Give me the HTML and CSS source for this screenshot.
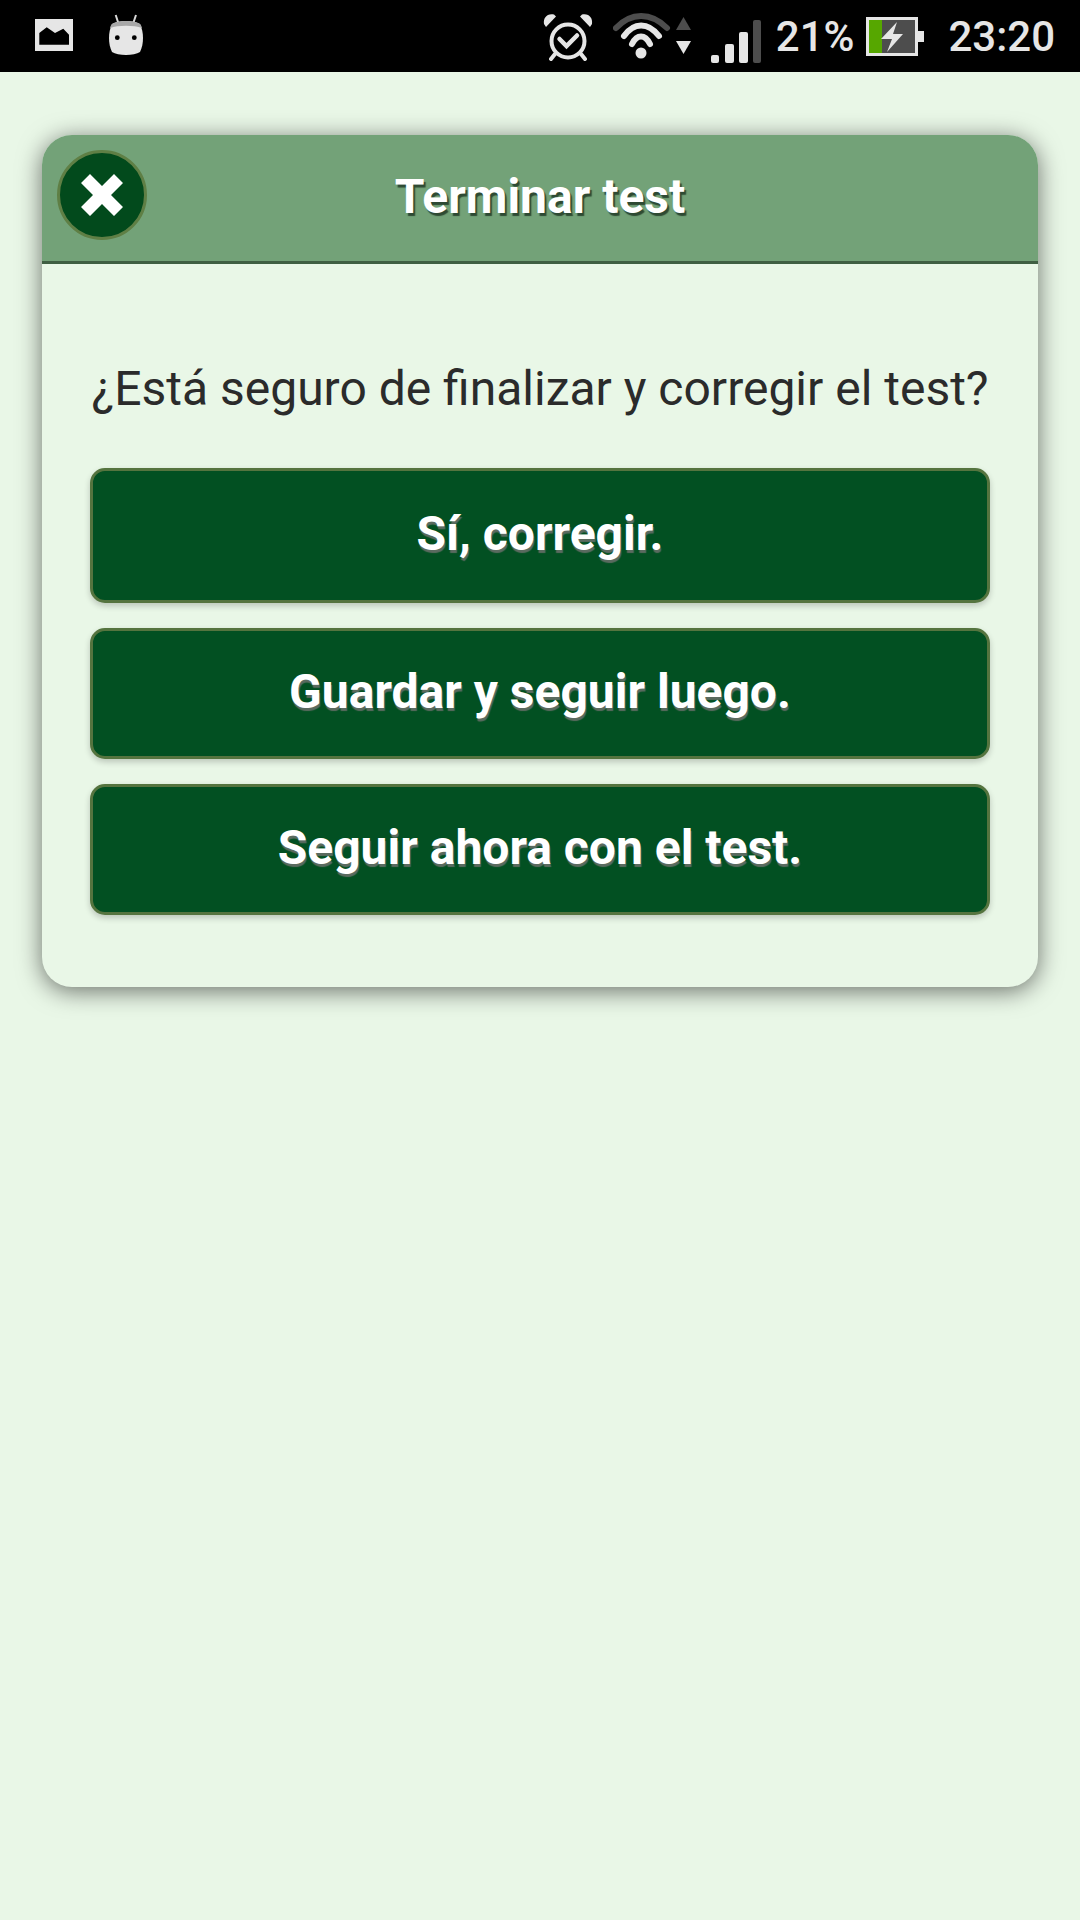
FILE: index.html
```html
<!DOCTYPE html>
<html lang="es">
<head>
<meta charset="utf-8">
<title>Terminar test</title>
<link rel="stylesheet" href="styles.css">
</head>
<body>
<header class="status">
  <div class="status-left">
    <svg class="ic-photo" width="38" height="32" viewBox="0 0 38 32"><path fill="#e6e6e6" fill-rule="evenodd" d="M0 0H38V32H0ZM4.3 25.7V14L11.7 8.3 20 14 28.3 9.7 34 15.7V25.7Z"/></svg>
    <svg class="ic-android" width="34" height="41" viewBox="0 0 34 41"><path d="M6.7 1L9.3 9M27 1L24.3 9" stroke="#d8d8d8" stroke-width="2" fill="none"/><path fill="#e6e6e6" d="M3 10C9 6 25 6 31 10 35 18 35 30 31 38 25 42 9 42 3 38-1 30-1 18 3 10Z"/><path fill="#a8a8a8" d="M3 10C9 6 25 6 31 10 32 11 32.500 12 33 14 25 11 9 11 1 14 1.500 12 2 11 3 10Z"/><circle cx="8.300" cy="23.700" r="2.400" fill="#000"/><circle cx="25.300" cy="23.700" r="2.400" fill="#000"/></svg>
  </div>
  <div class="status-right">
    <svg class="ic-alarm" width="50" height="49" viewBox="0 0 50 49"><g fill="none" stroke="#e6e6e6" stroke-linecap="round"><circle cx="25" cy="29" r="16.500" stroke-width="4"/><path d="M12 42L8 47M38 42L42 47" stroke-width="4"/><path d="M16.500 27L23.500 34 34 23.500" stroke-width="4.500"/></g><path fill="#e6e6e6" d="M1 12C0 6 4 1 11 2.500L13 4.500 3 15ZM49 12C50 6 46 1 39 2.500L37 4.500 47 15Z"/></svg>
    <svg class="ic-wifi" width="78" height="47" viewBox="0 0 78 47"><g fill="none" stroke-linecap="round" stroke-width="6"><path d="M3 15C18-1 38-1 54 15" stroke="#4d4d4d"/><path d="M11 23C21 9 35 9 46 23" stroke="#e6e6e6"/><path d="M19 31C24 21 32 21 37 31" stroke="#e6e6e6"/></g><circle cx="28" cy="40" r="5.500" fill="#e6e6e6"/><path fill="#4d4d4d" d="M63 17L70.500 4 78 17Z"/><path fill="#e6e6e6" d="M63 28H78L70.500 41Z"/></svg>
    <svg class="ic-signal" width="50" height="43" viewBox="0 0 50 43"><rect y="35" width="8" height="8" rx="2" fill="#e6e6e6"/><rect x="14" y="24" width="9" height="19" rx="2" fill="#e6e6e6"/><rect x="28" y="12" width="9" height="31" rx="2" fill="#e6e6e6"/><rect x="42" width="8" height="43" rx="2" fill="#4d4d4d"/></svg>
    <span class="pct">21%</span>
    <svg class="ic-batt" width="58" height="39" viewBox="0 0 58 39"><rect x="1.500" y="1.500" width="49" height="36" fill="#4d4d4d" stroke="#e6e6e6" stroke-width="3"/><rect x="3" y="3" width="13" height="33" fill="#56a700"/><path fill="#e6e6e6" d="M31 5L15 22H26L21 35 37 17H27Z"/><rect x="52" y="14" width="6" height="11" fill="#e6e6e6"/></svg>
    <span class="clock">23:20</span>
  </div>
</header>
<main class="screen">
  <section class="dialog">
    <div class="dialog-head">
      <button class="close" type="button" aria-label="Cerrar">
        <svg width="42" height="42" viewBox="0 0 42 42"><path fill="#fff" d="M9 0L21 12 33 0 42 9 30 21 42 33 33 42 21 30 9 42 0 33 12 21 0 9Z"/></svg>
      </button>
      <h1 class="title">Terminar test</h1>
    </div>
    <div class="dialog-body">
      <p class="question">¿Está seguro de finalizar y corregir el test?</p>
      <div class="actions">
        <button class="action action-tall" type="button">Sí, corregir.</button>
        <button class="action" type="button">Guardar y seguir luego.</button>
        <button class="action" type="button">Seguir ahora con el test.</button>
      </div>
    </div>
  </section>
</main>
</body>
</html>
```
FILE: styles.css
```css
* { box-sizing: border-box; }
html, body { margin: 0; height: 100%; }
body {
  width: 1080px;
  height: 1920px;
  overflow: hidden;
  background: #e9f7e7;
  font-family: Roboto, "Liberation Sans", sans-serif;
  display: flex;
  flex-direction: column;
}
.status {
  height: 72px;
  flex: none;
  background: #000;
  display: flex;
  justify-content: space-between;
  align-items: center;
  padding: 0 25px 0 35px;
}
.status-left { display: flex; align-items: center; gap: 36px; }
.ic-android { margin-top: -4px; }
.ic-photo { margin-top: -2px; }
.status-right { display: flex; align-items: center; color: #e6e6e6; }
.ic-alarm { margin-right: 20px; }
.ic-wifi { margin-right: 20px; }
.ic-signal { margin-right: 15px; margin-top: 10px; }
.ic-batt { margin-left: 12px; }
.pct { font-size: 42px; font-weight: 500; }
.clock { font-size: 42px; font-weight: 500; margin-left: 24px; }
.screen { flex: 1; padding: 63px 42px 0; }
.dialog {
  border-radius: 30px;
  background: #e9f7e7;
  box-shadow: 0 4px 24px rgba(0, 0, 0, .55);
  overflow: hidden;
}
.dialog-head {
  height: 129px;
  padding-bottom: 3px;
  background: #73a278;
  border-bottom: 3px solid #3f5f43;
  display: flex;
  align-items: center;
  position: relative;
  justify-content: center;
}
.close {
  position: absolute;
  left: 15px;
  top: 15px;
  width: 90px;
  height: 90px;
  padding: 0;
  border-radius: 50%;
  border: 3px solid #5f7f45;
  background: radial-gradient(circle, #024a1c 72%, #075a28 80%);
  display: flex;
  align-items: center;
  justify-content: center;
}
.title {
  margin: 0;
  font-size: 48px;
  font-weight: 700;
  color: #fff;
  text-shadow: 2px 3px 1px #2e4a33;
}
.dialog-body { padding: 93px 48px 72px; }
.question {
  margin: 0 0 47px;
  font-size: 48px;
  line-height: 64px;
  color: #2b2b2b;
  text-align: center;
  white-space: nowrap;
}
.actions { display: flex; flex-direction: column; gap: 25px; }
.action {
  height: 131px;
  padding: 0 0 5px;
  border-radius: 15px;
  border: 3px solid #55743f;
  background: #025022;
  color: #fff;
  font-family: inherit;
  font-size: 48px;
  font-weight: 700;
  text-shadow: 1px 3px 1px #5b6b60;
  box-shadow: 0 3px 6px rgba(0, 0, 0, .2);
}
.action-tall { height: 135px; }
```
